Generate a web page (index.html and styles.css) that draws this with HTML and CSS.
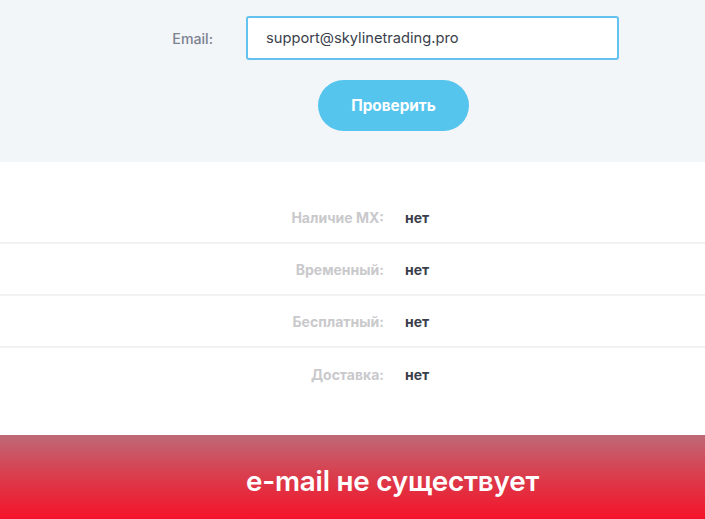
FILE: index.html
```html
<!DOCTYPE html>
<html lang="ru">
<head>
<meta charset="utf-8">
<link rel="stylesheet" href="styles.css">
</head>
<body>
<section class="check">
  <div class="form-row">
    <label class="form-label" for="email">Email:</label>
    <input class="form-input" id="email" type="text" value="support@skylinetrading.pro">
  </div>
  <div class="btn-row">
    <button class="btn">Проверить</button>
  </div>
</section>
<section class="results">
  <div class="row"><span class="key">Наличие MX:</span><span class="val">нет</span></div>
  <div class="row"><span class="key">Временный:</span><span class="val">нет</span></div>
  <div class="row"><span class="key">Бесплатный:</span><span class="val">нет</span></div>
  <div class="row last"><span class="key">Доставка:</span><span class="val">нет</span></div>
</section>
<section class="banner">
  <div class="banner-text">e-mail не существует</div>
</section>
</body>
</html>
```
FILE: styles.css
```css
* { box-sizing: border-box; }
html, body { margin: 0; padding: 0; }
body {
  font-family: "Inter", "Open Sans", "DejaVu Sans", sans-serif;
  background: #fff;
  width: 705px;
  overflow: hidden;
}
.check {
  background: #f3f6f8;
  height: 162px;
  padding-top: 16px;
}
.form-row {
  display: flex;
  align-items: center;
  height: 44px;
}
.form-label {
  width: 213px;
  text-align: right;
  color: #7b8290;
  font-size: 14.2px;
  font-weight: 500;
  padding-top: 1px;
}
.form-input {
  margin-left: 33px;
  width: 373px;
  height: 44px;
  border: 2px solid #63c3ee;
  border-radius: 3px;
  background: #fff;
  padding: 0 0 0 18px;
  font-family: inherit;
  font-size: 14.7px;
  color: #3b3f4c;
  outline: none;
}
.btn-row {
  display: flex;
  padding-left: 318px;
  margin-top: 20px;
}
.btn {
  width: 151px;
  height: 51px;
  border: none;
  border-radius: 26px;
  background: #56c5ee;
  color: #fff;
  font-family: inherit;
  font-size: 15.3px;
  font-weight: 700;
  padding: 0;
}
.results {
  padding-top: 30px;
  height: 273px;
}
.row {
  display: flex;
  align-items: center;
  height: 52px;
  border-bottom: 2px solid #f2f2f2;
}
.row.last { border-bottom: none; }
.key {
  width: 384px;
  text-align: right;
  color: #c9c9cc;
  font-size: 14px;
  font-weight: 700;
}
.val {
  margin-left: 21px;
  color: #3a3e4a;
  font-size: 14px;
  font-weight: 700;
}
.banner {
  height: 84px;
  background: linear-gradient(to bottom, #be6977 0%, #d8404f 45%, #f5132a 100%);
  display: flex;
  align-items: center;
  padding-left: 246px;
  padding-top: 8px;
}
.banner-text {
  color: #fff;
  font-size: 27.8px;
  font-weight: 600;
  letter-spacing: -0.2px;
}
```
